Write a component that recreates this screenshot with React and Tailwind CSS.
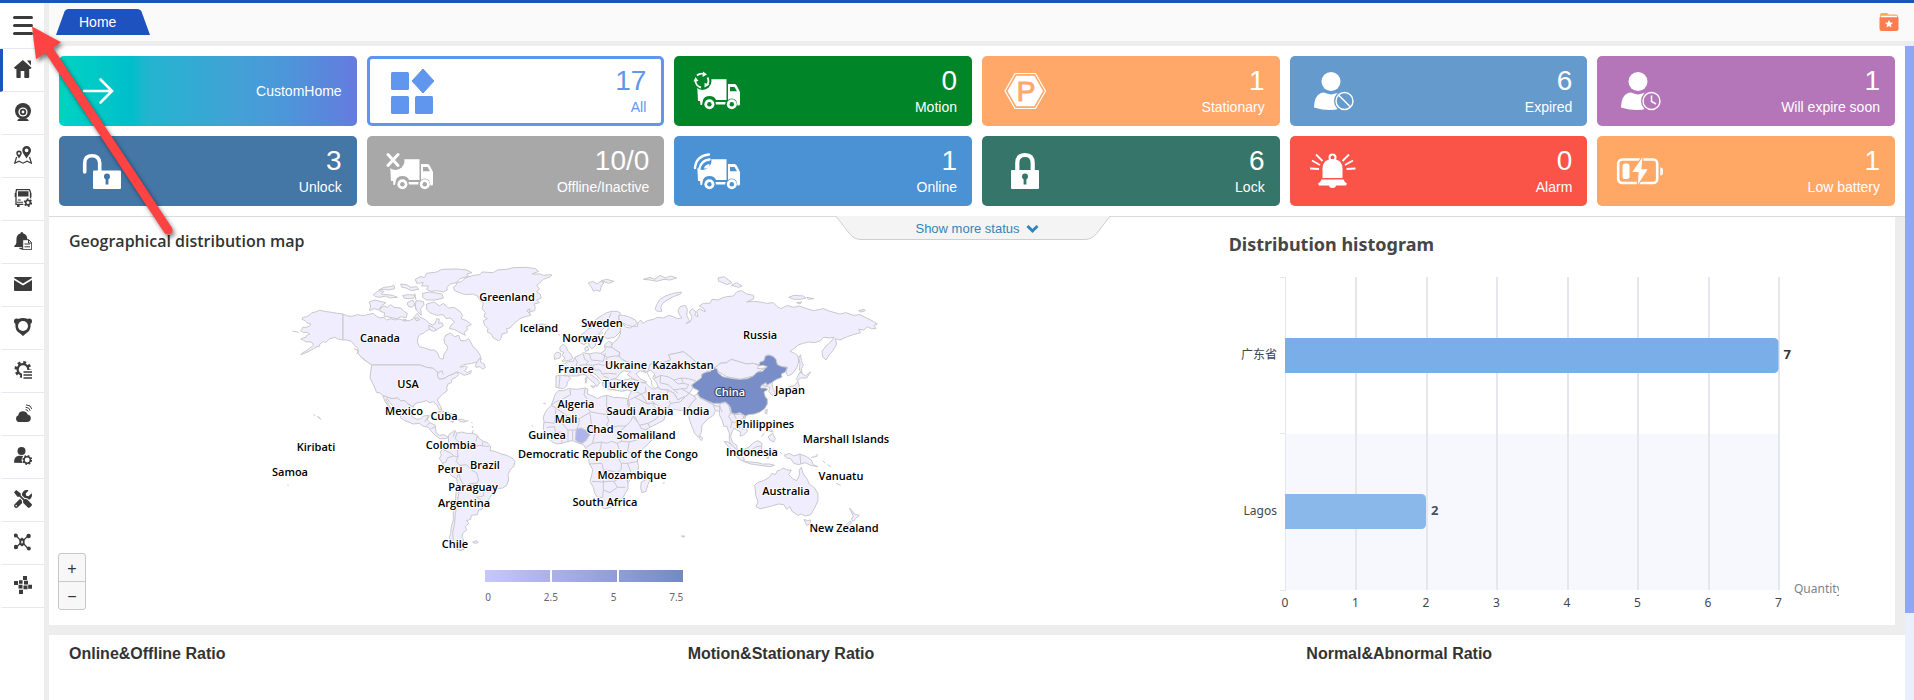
import { FaTools } from 'react-icons/fa'

const BLUE = '#1d52bf'
const INK = '#3b3b3b'

/* ---------- Sidebar icons ---------- */

const SideIcon = ({ children }) => (
  <svg width="18" height="18" viewBox="0 0 18 18" fill={INK} aria-hidden="true">{children}</svg>
)

const HomeIcon = () => (
  <SideIcon>
    <path d="M8.8 0 0 7.6 1 9h1.4v8.2q0 .8.8.8H6q.7 0 .7-.8V11h3.6v6.2q0 .8.8.8h3.3q.8 0 .8-.8V9h1.2l1.2-1.2z" />
    <path d="M13 .6h4v5z" />
  </SideIcon>
)

const WebcamIcon = () => (
  <SideIcon>
    <circle cx="9" cy="8" r="8" />
    <circle cx="9" cy="9" r="4.6" fill="#fff" />
    <circle cx="9" cy="9" r="3.2" />
    <circle cx="9" cy="9" r="1.4" fill="#fff" />
    <path d="M3.4 18q0-2.2 3-2.8h5.2q3 .6 3 2.8z" />
  </SideIcon>
)

const PinsIcon = () => (
  <SideIcon>
    <path fillRule="evenodd" d="M12.6 0a4.3 4.3 0 0 0-4.3 4.4c0 2.6 2.4 4.5 4.3 8 1.9-3.5 4.4-5.4 4.4-8A4.3 4.3 0 0 0 12.6 0zm0 2.4a1.9 1.9 0 1 1 0 3.8 1.9 1.9 0 0 1 0-3.8z" />
    <path fillRule="evenodd" d="M5 4.6A2.7 2.7 0 0 0 2.3 7.4C2.3 9 3.8 10 5 12.4 6.2 10 7.7 9 7.7 7.4A2.7 2.7 0 0 0 5 4.6zm0 1.6a1.2 1.2 0 1 1 0 2.4 1.2 1.2 0 0 1 0-2.4z" />
    <path d="M2.6 11 .7 17.2l4.3-2 4 2 4-2 4.4 2-1.9-6.2" fill="none" stroke={INK} strokeWidth="1.2" />
  </SideIcon>
)

const BusIcon = () => (
  <SideIcon>
    <path d="M2.5.7h13l1 2.6v12H2V3.3z" fill="none" stroke={INK} strokeWidth="1.3" />
    <path d="M4 2.2h10.5v5.200H4zM.7 4h1.400v4H.7zM16 4h1.400v4H16zM3 15h2.600v3H3zM3.800 10.500h3v1h-3zM3 12.800h6v1H3z" />
    <circle cx="14" cy="13.6" r="5" fill="#fff" />
    <circle cx="14" cy="13.6" r="3.4" fill="none" stroke={INK} strokeWidth="1.8" strokeDasharray="1.780 1.780" />
    <circle cx="14" cy="13.6" r="2.300" fill="none" stroke={INK} strokeWidth="1.600" />
  </SideIcon>
)

const BellDocIcon = () => (
  <SideIcon>
    <path d="M7.8 0q1.5 0 1.5 1.600 4 1.200 4 6v3.200l1.500 4.200H.4q-.6-1 .6-1.800 1.400-1 1.400-3V7.600q0-4.800 4-6Q6.400 0 7.800 0zM5 15.800h4v1.600q-4 .4-4-1.600z" />
    <path d="M8.700 7.700h6l3 3v7h-9z" fill="#fff" stroke={INK} strokeWidth="1" />
    <path d="M10.500 12h5.500M10.500 14.800h5.500M14.500 8v3h3" stroke={INK} strokeWidth="1" fill="none" />
  </SideIcon>
)

const MailIcon = () => (
  <SideIcon>
    <path d="M0 3q0-1 1-1h16q1 0 1 1L9 8.600z" />
    <path d="M0 5v10q0 1 1 1h16q1 0 1-1V5l-9 5.600z" />
  </SideIcon>
)

const ShieldIcon = () => (
  <SideIcon>
    <circle cx="2.600" cy="3.200" r="2.600" />
    <circle cx="15.400" cy="3.200" r="2.600" />
    <path d="M9 0q5 0 7 2.500.8 3 .5 6.500-.8 4.500-4 6L9 18l-3.500-3q-3.400-1.500-4-6-.4-3.500.5-6.500Q4 0 9 0z" />
    <circle cx="9" cy="8" r="5" fill="#fff" />
  </SideIcon>
)

const GearListIcon = () => (
  <SideIcon>
    <circle cx="9" cy="8.500" r="7" fill="none" stroke={INK} strokeWidth="3" strokeDasharray="2.750 2.750" />
    <circle cx="9" cy="8.500" r="5.400" fill="none" stroke={INK} strokeWidth="2.200" />
    <path d="M8 9h10v9H8z" fill="#fff" />
    <path d="M9.500 10.200H18v1.500H9.500zM9.500 13.200H18v1.500H9.500zM9.500 16.200H18v1.500H9.500z" />
  </SideIcon>
)

const CloudIcon = () => (
  <SideIcon>
    <path d="M6 18q-4 0-4-3.600 0-2.400 2.300-3.200.5-4 4.700-4 3.400 0 4.600 3.300 3.200.5 3.200 3.800 0 3.700-4 3.700z" />
    <path d="M11.600 5.600q2 0 2.500 2M11.600 3.200q4 .2 4.600 3.600M12 .8q5 .2 6 4.400" fill="none" stroke={INK} strokeWidth="1" />
  </SideIcon>
)

const UserGearIcon = () => (
  <SideIcon>
    <circle cx="7.500" cy="4" r="4" />
    <path d="M0 15.800Q0 9.400 4.500 8.800L11 9v7z" />
    <circle cx="13.200" cy="13" r="5.600" fill="#fff" />
    <circle cx="13.200" cy="13" r="4.200" fill="none" stroke={INK} strokeWidth="1.600" strokeDasharray="1.650 1.650" />
    <circle cx="13.200" cy="13" r="3.200" fill="none" stroke={INK} strokeWidth="1.500" />
  </SideIcon>
)

const NetworkIcon = () => (
  <SideIcon>
    <path d="M2 2.500 14.500 16M14.500 2.500 2 14.500" stroke={INK} strokeWidth="1.200" />
    <path d="M8 4.500 10.600 6.500v5L8 13.500 5.400 11.500v-5z" />
    <path d="M8 7.300l1 1.800-1 1.800-1-1.800z" fill="#fff" />
    <circle cx="1.800" cy="2.400" r="2" />
    <circle cx="14.600" cy="3" r="2.200" />
    <circle cx="1.900" cy="14" r="2.200" />
    <circle cx="14.800" cy="15.600" r="2" />
  </SideIcon>
)

const ClusterIcon = () => (
  <SideIcon>
    <path d="M9 0h4v4H9zM5 4.200h3.600v3.600H5zM10 4.800h4v3.800h-4zM0 5h4v4H0zM4.500 8.800h4v3.800h-4zM9.500 9.500h4v3.800h-4zM14.200 8.800H18v4h-3.800zM5 13.800h4V18H5z" />
  </SideIcon>
)

const menu = [
  { label: 'Home', icon: HomeIcon, active: true },
  { label: 'Monitor', icon: WebcamIcon },
  { label: 'Track', icon: PinsIcon },
  { label: 'Vehicles', icon: BusIcon },
  { label: 'Alarm report', icon: BellDocIcon },
  { label: 'Messages', icon: MailIcon },
  { label: 'Geofence', icon: ShieldIcon },
  { label: 'Settings', icon: GearListIcon },
  { label: 'Cloud', icon: CloudIcon },
  { label: 'Users', icon: UserGearIcon },
  { label: 'Tools', icon: () => <FaTools size={18} color={INK} /> },
  { label: 'Network', icon: NetworkIcon },
  { label: 'Cluster', icon: ClusterIcon },
]

/* ---------- Status card icons ---------- */

const CardIcon = ({ children, color = '#fff' }) => (
  <svg width="48" height="48" viewBox="0 0 48 48" fill={color} className="shrink-0" aria-hidden="true">{children}</svg>
)

const ArrowIcon = () => (
  <CardIcon>
    <path d="M6 24h27M22.500 12.500 34 24 22.500 35.500" fill="none" stroke="#fff" strokeWidth="2.600" strokeLinecap="round" />
  </CardIcon>
)

const AllIcon = () => (
  <CardIcon color="#6196ee">
    <rect x="5" y="5" width="18" height="18" rx="1.500" />
    <rect x="5" y="29" width="18" height="18" rx="1.500" />
    <rect x="29" y="29" width="18" height="18" rx="1.500" />
    <path d="M37 2 48 14 37 26 26 14z" stroke="#6196ee" strokeLinejoin="round" />
  </CardIcon>
)

const Truck = ({ cut, children }) => (
  <CardIcon>
    <path d="M4 15h8v-2.700h21.500V33H23q-1.500-4-6.500-4t-6.500 4l-1 5H7.500l-.5-4H5z" />
    <path d="M22.500 35h10.200l-.7 2.500H23z" />
    <path d="M35 17h6.500q1.500 0 2.200 1.500L47 25v12q0 1.500-1.500 1.500h-1Q44 31.500 38.800 31.500q-3 0-3.800 1.500z" />
    <path d="M37 20h4.500l2.500 4.300H37z" fill={cut} />
    <circle cx="16.400" cy="37.300" r="5" />
    <circle cx="16.400" cy="37.300" r="2.200" fill={cut} />
    <circle cx="38.800" cy="37.300" r="5" />
    <circle cx="38.800" cy="37.300" r="2.200" fill={cut} />
    <circle cx="9.500" cy="14" r="9" fill={cut} />
    {children}
  </CardIcon>
)

const MotionIcon = () => (
  <Truck cut="#008528">
    <g fill="none" stroke="#fff" strokeWidth="1.800">
      <path d="M4 8.500A7 7 0 0 1 11 7M14.500 10.500A7 7 0 0 1 13.500 18.500M8 20.500A7 7 0 0 1 2.500 13.500" />
    </g>
    <path d="M10 4.500 14 7.500l-4.500 2.400zM16.500 17.500l-5 3v-4.500zM.5 14.500 2.500 10 5.500 14z" />
  </Truck>
)

const OfflineIcon = () => (
  <Truck cut="#a8a8a8">
    <path d="M2 7.500 12 18.500M12 7.500 2 18.500" stroke="#fff" strokeWidth="3" strokeLinecap="round" />
  </Truck>
)

const OnlineIcon = () => (
  <Truck cut="#4b92d4">
    <path d="M2 21Q3 9 16 7.500M6.500 21.500Q8 13.500 16.500 12.500" fill="none" stroke="#fff" strokeWidth="2.400" strokeLinecap="round" />
    <path d="M11 21.500Q11.500 17.500 16.500 17L16.500 21.500z" />
  </Truck>
)

const ParkIcon = () => (
  <CardIcon>
    <path d="M4 24 14 6.500h20.500L44.500 24 34.500 41.500H14z" fill="none" stroke="#fff" strokeWidth="1.200" />
    <path d="M6.500 24 15.300 8.700h18L42 24l-8.700 15.300h-18z" />
    <text x="25" y="34" textAnchor="middle" fontFamily="Liberation Sans, sans-serif" fontSize="28" fill="#ffa869" stroke="#ffa869">P</text>
  </CardIcon>
)

const Person = ({ cut, children }) => (
  <CardIcon>
    <circle cx="22" cy="14.500" r="9.500" />
    <path d="M5 40.500Q5 29 12 26q3-1 5 .3 5 2.200 10 0l4-.8v16Q20 45 5 40.500z" />
    <circle cx="35.500" cy="34" r="10.500" fill={cut} />
    <circle cx="35.500" cy="34" r="8.500" fill="none" stroke="#fff" strokeWidth="1.400" />
    {children}
  </CardIcon>
)

const ExpiredIcon = () => (
  <Person cut="#659acd"><path d="M29.500 28 41.500 40" stroke="#fff" strokeWidth="1.400" /></Person>
)

const SoonIcon = () => (
  <Person cut="#b576b9"><path d="M35.500 28.500V34.500L40 37" fill="none" stroke="#fff" strokeWidth="1.500" /></Person>
)

const UnlockIcon = () => (
  <CardIcon>
    <path d="M6.700 25V16Q6.700 8.700 14 8.700t7.700 7.300v9" fill="none" stroke="#fff" strokeWidth="3.600" strokeLinecap="round" />
    <rect x="15" y="23.500" width="28" height="18.500" rx="1" />
    <circle cx="29" cy="29.500" r="3" fill="#4476a6" />
    <path d="M27.600 30h2.800v7.500h-2.800z" fill="#4476a6" />
  </CardIcon>
)

const LockIcon = () => (
  <CardIcon>
    <path d="M16.300 24V16Q16.300 8 24 8t7.700 8v8" fill="none" stroke="#fff" strokeWidth="4.200" />
    <rect x="10" y="23" width="28" height="19" rx="1" />
    <circle cx="24" cy="29.500" r="3" fill="#36756a" />
    <path d="M22.600 30h2.800v7.500h-2.800z" fill="#36756a" />
  </CardIcon>
)

const AlarmIcon = () => (
  <CardIcon>
    <circle cx="23.500" cy="10.500" r="3" fill="none" stroke="#fff" strokeWidth="2" />
    <path d="M13.500 31V22q0-10 10-10t10 10v9zM12.500 32.500h22q1 3 3.500 4l-1 2H27q-.5 2.500-3.500 2.500T20 38.500H10l-1-2q2.500-1 3.500-4z" />
    <path d="M7 7.500l6.500 6.500M3 13.500l8 4.500M1 21.500l9 .5M40 7.500 33.500 14M44 13.500 36 18M46.500 21.500l-9 .5" stroke="#fff" strokeWidth="1.800" />
  </CardIcon>
)

const BatteryIcon = () => (
  <CardIcon>
    <rect x="2.200" y="12.500" width="39" height="23.500" rx="4" fill="none" stroke="#fff" strokeWidth="2.600" />
    <rect x="6.500" y="16.500" width="7" height="15.500" rx="2.500" />
    <path d="M44.300 20.500q2.700 0 2.700 2.500v3q0 2.500-2.700 2.500z" />
    <path d="M27.300 8 15.300 25.500H22L21.300 39.500 32.700 21.700H26z" stroke="#ffa866" strokeWidth="1.200" />
  </CardIcon>
)

const cards = [
  { label: 'CustomHome', icon: ArrowIcon, style: 'pl-[19px] pr-[15px] text-white bg-[linear-gradient(90deg,#00d3c2_0%,#00bfcb_24%,#23b4d0_30%,#44a1d6_60%,#4b97d8_75%,#657bde_100%)]' },
  { value: '17', label: 'All', icon: AllIcon, style: 'pl-4 pr-[15px] border-3 border-[#6196ee] bg-white text-[#6196ee]' },
  { value: '0', label: 'Motion', icon: MotionIcon, style: 'pl-[19px] pr-[15px] bg-[#008528] text-white' },
  { value: '1', label: 'Stationary', icon: ParkIcon, style: 'pl-[19px] pr-[15px] bg-[#ffa869] text-white' },
  { value: '6', label: 'Expired', icon: ExpiredIcon, style: 'pl-[19px] pr-[15px] bg-[#659acd] text-white' },
  { value: '1', label: 'Will expire soon', icon: SoonIcon, style: 'pl-[19px] pr-[15px] bg-[#b576b9] text-white' },
  { value: '3', label: 'Unlock', icon: UnlockIcon, style: 'pl-[19px] pr-[15px] bg-[#4476a6] text-white' },
  { value: '10/0', label: 'Offline/Inactive', icon: OfflineIcon, style: 'pl-[19px] pr-[15px] bg-[#a8a8a8] text-white' },
  { value: '1', label: 'Online', icon: OnlineIcon, style: 'pl-[19px] pr-[15px] bg-[#4b92d4] text-white' },
  { value: '6', label: 'Lock', icon: LockIcon, style: 'pl-[19px] pr-[15px] bg-[#36756a] text-white' },
  { value: '0', label: 'Alarm', icon: AlarmIcon, style: 'pl-[19px] pr-[15px] bg-[#fa5448] text-white' },
  { value: '1', label: 'Low battery', icon: BatteryIcon, style: 'pl-[19px] pr-[15px] bg-[#ffa866] text-white' },
]

/* ---------- World map ---------- */

// western hemisphere outlines
const west = [
  // Alaska
  'M189 192 172 190 155 187 140 185 118 181 106 186 95 188 88 196 80 200 67 203 66 208 75 212 80 218 92 222 90 228 80 232 68 232 66 238 62 242 70 248 82 247 90 252 80 256 78 262 68 264 62 268 70 270 76 275 92 276 98 279 100 286 88 296 76 304 68 308 62 314 78 308 95 300 108 291 120 288 118 284 130 274 136 278 150 266 165 262 176 268 189 270z',
  // Canada
  'M189 192 202 198 215 199 232 194 250 197 262 194 280 190 288 198 300 204 312 202 320 210 332 206 345 210 358 207 372 212 388 212 400 206 404 198 412 190 420 202 430 206 440 212 447 220 458 225 466 220 470 206 478 208 476 220 486 218 490 228 478 234 468 240 452 238 440 241 430 250 420 253 414 262 412 275 418 290 434 294 450 300 462 300 472 307 476 318 480 326 490 327 492 312 500 302 503 290 494 280 492 266 498 255 512 250 524 260 536 256 542 272 556 272 566 266 578 288 590 300 600 315 604 328 592 336 575 340 562 342 550 344 540 352 556 348 562 352 554 362 562 368 574 362 572 370 552 376 542 370 530 366 520 372 505 378 492 386 478 388 472 378 474 368 460 355 440 352 420 345 275 345 262 336 250 328 240 318 232 305 234 296 222 284 214 274 200 270 189 270z',
  // USA
  'M275 345 420 345 440 352 460 355 474 368 472 378 478 388 492 386 505 378 520 372 530 366 536 374 528 382 516 388 514 398 504 402 500 414 502 422 488 432 478 442 472 450 480 466 486 478 478 480 470 464 460 455 448 458 440 452 425 456 412 458 402 464 400 472 390 464 384 462 375 452 362 452 352 444 336 446 308 437 300 428 290 428 282 408 276 396 270 384 272 366z',
  // Mexico and Central America
  'M308 437 336 446 352 444 362 452 375 452 384 462 393 468 390 486 396 500 410 508 422 506 430 498 448 496 442 510 450 518 466 526 468 548 478 556 492 554 505 562 498 566 480 566 466 556 452 542 446 532 428 528 418 520 400 522 375 512 362 504 360 494 350 482 340 470 330 458 322 446 318 448 326 462 334 478 326 470 316 456z',
  // Greenland
  'M520 112 530 104 528 98 545 95 556 84 580 76 600 74 606 66 640 68 652 60 680 58 700 53 740 52 766 56 776 64 756 72 780 72 790 76 815 74 812 80 790 88 778 100 770 106 778 116 770 126 780 132 784 144 770 150 778 158 762 162 766 172 764 182 748 186 752 196 735 200 720 206 700 222 690 234 680 236 682 248 666 252 662 268 656 272 640 264 634 252 622 246 624 236 614 226 610 212 622 206 612 200 616 188 606 176 610 160 600 152 592 138 578 132 556 134 544 130 524 122z',
  // Arctic islands
  'M406 88 420 80 434 82 440 70 470 66 485 58 530 57 560 60 576 68 560 72 566 78 540 86 528 98 512 102 500 112 502 120 490 126 470 122 452 124 440 118 445 108 425 108 430 98 410 100z',
  'M428 130 450 126 486 132 490 144 466 150 440 150 428 142z',
  'M268 156 284 150 300 154 318 158 306 166 296 180 282 176 268 182 272 168z',
  'M300 176 312 168 322 172 332 164 342 172 362 174 372 184 382 190 378 204 364 200 350 206 330 202 312 198 314 188 300 184z',
  'M440 162 462 156 478 168 490 160 505 174 522 172 540 184 548 196 543 206 560 212 574 224 560 230 562 240 552 248 556 256 540 248 522 238 508 236 512 226 524 216 510 204 498 206 490 194 470 196 450 188 440 178z',
  'M280 134 296 122 312 124 304 132 320 134 338 136 352 142 330 144 318 138 300 142 286 140z',
  'M296 120 312 112 330 110 342 106 344 116 326 120 312 118z',
  'M362 102 380 104 392 112 410 110 416 118 394 122 378 114 366 112z',
  'M368 136 388 134 406 136 402 144 384 146 372 144z',
  'M382 158 398 150 404 162 396 172 384 168zM408 152 430 154 432 164 422 176 424 196 412 184 406 170z',
  'M368 210 378 208 376 214zM446 226 460 232 470 240 460 244 448 238zM404 204 414 204 418 210 408 212z',
  // Newfoundland
  'M586 346 592 334 600 324 602 336 612 342 616 352 608 358 600 350 588 352z',
  // Greater Antilles
  'M470 487 484 483 500 487 516 492 532 502 520 503 508 496 490 490 476 490zM534 508 548 508 560 514 552 516 540 515zM512 514 522 514 518 517z',
  // South America
  'M505 562 508 552 518 546 524 540 530 550 545 546 560 550 580 550 592 556 598 566 610 574 622 578 632 590 630 602 645 604 664 612 680 616 696 624 705 634 702 648 690 660 684 674 686 690 680 706 668 714 652 716 640 722 634 736 625 750 612 756 604 752 606 762 612 768 606 778 596 780 592 794 574 796 572 808 560 812 566 820 556 830 560 840 548 850 546 862 552 870 546 880 552 898 540 902 524 894 514 880 508 862 512 850 514 830 520 810 520 784 526 760 528 730 532 700 530 686 516 678 502 664 494 650 484 634 478 626 484 614 480 606 488 598 500 590 506 576z',
  // Falklands, Hawaii, Iceland, Aleutians
  'M578 876 590 872 594 878 584 880zM100 494 106 496M112 500 118 502 122 508 118 504zM38 244 48 245 56 248M790 460 798 462M755 228 765 224 790 222 806 228M834 252 840 256M756 526 758 530M22 704 26 706M560 512 566 513M574 516 577 520M576 528 578 534M580 540 576 552',
]

// inner borders of the Americas
const westLines = [
  'M262 336 240 318M222 296 236 302 230 312M446 496 434 516M450 518 440 526M466 530 454 536M474 368 486 362 490 374',
  'M530 550 526 566 534 574 550 580 548 592 532 600 534 620 520 618 502 624 498 636 486 640M488 598 500 604 514 610 520 618M550 580 566 576 576 580 584 590 598 586 612 588 628 590M592 556 588 574M610 574 606 586M534 620 528 634 540 646 560 644 574 660 590 668 596 690 590 700 576 700M540 646 536 670 530 686M536 670 544 694 552 706 576 700 596 716 612 726 610 738 590 742M540 706 536 730 532 760 526 790 524 820 518 850 520 876M590 742 606 752M524 546 520 560M404 130 408 150M404 162 408 180M740 182 750 176 748 190z',
]

// eastern hemisphere outlines
const east = [
  // Scandinavia and Finland
  'M118 262 126 252 138 244 144 236 154 234 160 218 168 208 180 200 190 194 200 188 216 184 232 184 242 190 236 200 238 214 244 232 240 246 224 262 200 266 192 258 198 244 206 236 198 230 188 238 176 252 178 264 170 272 166 288 156 296 148 290 144 276 132 284 120 278z',
  // Russia
  'M236 196 252 196 270 202 286 210 292 220 280 230 262 226 246 218 258 232 272 234 280 228 292 230 294 218 302 210 308 220 322 212 340 208 352 202 370 204 386 196 400 200 412 206 426 204 418 194 414 182 420 170 436 166 442 178 440 196 446 208 450 216 438 220 452 214 456 200 448 186 456 176 468 186 464 196 474 200 470 184 478 176 496 186 492 176 478 168 490 160 510 160 516 148 534 150 546 144 560 140 580 138 590 126 604 122 620 132 640 136 642 146 620 156 640 154 660 156 680 160 700 158 712 170 722 176 742 166 760 172 778 168 800 176 820 182 850 176 870 184 900 192 918 188 940 196 960 194 984 206 1000 214 1012 222 1002 226 1008 236 994 236 982 230 972 240 956 238 962 248 940 254 922 260 900 270 886 266 890 282 880 300 868 314 858 330 848 320 846 304 858 288 872 276 882 262 868 264 850 262 842 272 824 278 806 276 790 280 776 284 762 296 750 304 764 310 774 318 776 336 770 354 756 372 744 378 738 368 742 352 722 350 712 344 706 328 698 318 680 315 664 346 640 340 620 342 600 336 574 328 560 338 540 340 530 352 500 350 470 338 450 320 430 305 408 310 386 314 392 330 370 338 345 334 330 344 334 358 322 368 308 358 296 352 286 344 262 336 246 328 236 318 240 308 226 300 214 290 218 280 234 266 242 250 240 224z',
  // Central Asia
  'M322 368 330 344 345 334 370 338 392 330 386 314 408 310 430 305 450 320 470 338 500 350 522 356 520 362 500 366 486 372 484 384 470 394 455 405 458 416 448 430 436 440 424 444 414 450 402 430 384 420 362 418 352 408 344 400 336 388 346 384 344 374z',
  // Middle East, Iran, Afghanistan, Pakistan
  'M188 396 204 390 222 386 246 392 272 386 296 392 306 398 318 400 326 408 340 418 352 412 362 418 384 420 402 430 414 450 424 444 436 440 448 430 462 438 468 446 456 458 448 470 440 478 424 482 400 478 382 474 368 478 350 464 338 460 350 478 362 484 376 494 372 510 350 522 330 532 306 544 298 526 284 498 270 470 264 450 268 434 274 424 262 420 246 424 222 420 200 416 188 408z',
  // Mongolia
  'M522 356 540 340 560 338 574 328 600 336 620 342 640 340 656 346 652 356 676 354 654 366 640 378 600 388 560 380 540 368z',
  // Korea
  'M664 406 680 398 700 390 696 402 700 420 708 430 696 436 686 424 690 412z',
  // Japan, Sakhalin
  'M770 386 780 366 796 378 812 366 800 384 782 384 772 392zM774 394 778 408 766 422 750 424 736 430 718 430 706 438 702 432 724 424 744 412 764 406zM782 314 784 332 790 346 784 356 786 370 778 360 780 340 776 324z',
  // India
  'M448 470 456 458 468 446 462 438 472 432 480 444 500 454 520 460 540 460 546 468 540 484 526 482 520 496 502 508 486 526 484 548 476 562 464 550 456 530 448 508 446 494 436 488z',
  'M480 558 488 564 484 572 478 566z',
  // Indochina
  'M540 460 556 458 566 466 572 488 582 494 606 492 612 504 600 510 618 530 622 544 610 556 600 558 602 546 590 540 582 534 576 546 572 560 578 578 590 586 592 600 580 596 568 574 568 550 560 528 552 530 546 510 538 494z',
  // Indonesia, Philippines, Papua
  'M552 574 564 576 578 588 592 600 606 616 614 630 604 632 588 618 572 598zM610 634 630 636 652 638 668 642 688 642 704 646 690 650 660 646 632 642zM612 598 626 592 640 578 654 572 666 580 664 600 656 618 640 620 620 614zM676 604 690 598 704 598 692 606 700 616 688 614 684 626 678 620z',
  'M678 524 690 522 692 538 700 546 690 544 682 538zM684 560 698 550 706 566 700 576 690 570zM664 560 674 548M676 480 682 478 680 492 675 490zM610 500 618 498 614 508z',
  'M732 616 748 610 762 618 780 612 800 620 814 630 820 644 834 650 812 646 796 638 776 644 762 640 752 626 740 624zM814 622 830 620 832 612M848 632 856 640M862 644 872 650M720 606 726 612M888 700 902 706',
  // Europe
  'M54 346 72 342 86 334 100 334 104 322 122 314 130 308 148 312 166 308 182 310 196 300 194 284 206 274 216 278 214 290 226 300 240 308 236 318 246 328 262 336 286 344 296 352 308 358 318 368 300 362 288 372 300 386 320 396 306 398 280 386 262 374 272 366 252 362 240 370 230 384 216 388 206 394 210 408 198 410 190 396 178 386 168 374 156 366 152 374 170 386 180 398 170 410 164 400 148 388 136 374 124 374 112 378 96 378 74 378 78 364 68 352z',
  'M48 378 60 376 84 378 92 386 82 396 80 408 70 416 56 414 48 412zM60 292 70 282 78 290 84 304 94 314 98 326 86 332 66 334 76 324 66 316 72 308 60 302zM42 316 50 306 62 310 60 324 44 328z',
  'M136 384 140 382 140 396 136 400zM152 408 166 408 160 414zM214 418 226 418M248 420 256 422M134 294 142 288 146 300 136 304z',
  // Africa
  'M46 432 56 422 70 422 86 416 112 418 136 414 144 418 142 432 158 438 172 446 184 440 200 436 220 442 252 444 262 446 268 458 262 462 274 484 282 504 296 520 304 536 322 540 344 542 350 548 338 568 320 586 304 600 294 616 292 634 296 650 292 668 276 682 264 698 264 716 256 730 246 746 232 762 212 772 194 776 182 768 174 744 164 730 160 712 150 694 156 672 158 658 148 642 146 628 136 612 138 596 130 584 112 578 98 572 84 574 66 580 50 582 34 574 22 562 14 550 10 534 12 516 10 500 20 480 34 466z',
  'M304 696 316 690 326 672 332 686 324 704 318 724 306 728 302 714z',
  // Arctic archipelagos
  'M345 178 350 164 360 148 376 138 400 130 424 126 422 132 400 140 382 150 368 160 362 172 366 184 352 184z',
  'M144 100 158 94 172 102 180 94 192 98 184 108 180 124 168 120 160 124 154 110zM184 92 200 88 222 94 206 100zM310 88 330 82 344 88 360 76 376 84 392 78 410 84 390 90 372 88 350 94 330 90z',
  'M534 84 552 80 566 90 576 98 560 104 544 96 536 94zM574 106 590 98 606 108 596 112zM746 142 762 136 790 138 798 144 780 148 764 148zM800 142 822 146 806 148zM770 158 786 156 780 162zM956 182 972 178 976 182 962 186z',
  // Australia, Tasmania, New Zealand
  'M644 706 652 698 670 692 688 682 696 670 706 674 712 662 722 660 728 654 744 660 754 660 746 674 758 686 770 692 778 676 778 660 784 652 790 672 802 688 808 702 824 714 834 732 834 752 824 774 812 794 796 798 784 792 774 796 756 784 750 770 740 778 732 764 716 762 696 768 680 772 660 776 648 770 654 756 648 738z',
  'M792 808 802 812 812 810 810 822 800 826zM928 774 938 784 942 792 958 796 946 806 940 814 934 808 940 798zM932 812 934 820 920 832 906 848 896 850 904 838 920 824zM424 858 434 858 432 862zM368 700 374 698',
]

const eastLines = [
  // Europe
  'M104 322 112 336 108 350 118 356 114 374M130 312 134 328 146 334 136 344 118 346M148 312 154 330 174 332 190 334 196 310M136 344 158 346 174 342 190 346 214 338 236 346 262 354M160 348 164 360 180 360 186 372 206 370 230 372M182 310 202 322 224 318 240 318M202 322 196 334M192 290 216 292M190 378 206 384M60 378 58 400 56 414M190 246 168 262 150 264M214 188 206 206 190 216 176 236',
  // Africa
  'M90 418 92 434 70 446 46 456 34 466M136 414 132 434 142 448 140 470 152 486M34 466 48 474 84 500 118 506 152 486 200 494 200 436M200 494 206 512 200 524 208 536 232 528 258 528 272 514 278 500M200 486 272 486M48 474 44 520 12 516M44 520 66 520 84 500M118 506 116 526 108 540 84 540 66 520M150 490 154 520 148 540M154 530 164 550 190 546 208 536M20 532 44 530 46 548 24 552M46 548 64 546 66 578M84 540 84 574M98 540 98 572M164 550 158 580 138 592M158 580 184 576 200 580 214 574 232 580 244 574 246 556 232 550 258 528M244 574 268 576 304 566 322 560M184 576 182 596 166 620 148 622M232 580 238 600 232 620 244 640 262 640 294 634M148 642 186 640 190 660 210 662 232 668 244 658 244 640M156 694 190 696 204 694 222 694 240 684 262 690 264 700M190 660 190 696 190 720 188 742 172 742M190 720 210 728 232 712 256 712M222 694 232 712M268 576 262 604 294 620M262 640 270 658 276 680M262 450 266 470',
  // Middle East and Central Asia
  'M274 424 290 426 304 432 318 426 316 410M268 450 284 442 304 432 322 460 338 460M284 442 300 450 326 464M322 426 330 448 346 462M298 526 324 520 350 506 362 484M330 532 324 520M384 420 380 440 392 460 384 474M392 460 420 456 436 440M346 384 362 376 384 380 402 390 424 384 446 386 470 394M362 376 360 398 384 404 402 420 414 430M402 390 414 402 430 400 446 404 440 416 424 416M424 384 430 400M402 420 424 416 448 430',
  // South and South-East Asia
  'M500 454 520 464 526 482M520 466 540 470 546 486M572 488 566 500 576 516 572 534M582 494 590 508 606 520 608 540M576 516 594 518 600 534 584 536M612 600 634 600 650 590 664 588M780 612 782 642',
]

const CHINA = 'M455 405 470 394 484 384 486 372 500 366 512 364 520 352 532 358 534 368 548 380 580 386 600 388 622 386 640 378 652 366 668 364 676 354 682 350 668 346 656 348 660 336 672 332 676 318 688 315 700 320 708 328 712 344 726 350 742 352 736 366 724 372 726 382 710 388 694 398 680 406 678 398 664 406 662 414 676 414 684 418 672 426 676 440 682 448 682 462 674 476 660 486 644 492 626 494 616 498 600 488 584 492 574 488 572 474 566 464 556 456 540 460 520 460 500 452 480 442 472 430 476 422 460 414z'
const NIGERIA = 'M108 544 112 536 124 534 136 540 150 540 154 548 144 562 138 572 126 580 114 576 106 570z'

const places = [
  ['Greenland', 507, 301], ['Iceland', 539, 332], ['Canada', 380, 342], ['USA', 408, 388], ['Mexico', 404, 415],
  ['Cuba', 444, 420], ['Kiribati', 316, 451], ['Samoa', 290, 476], ['Colombia', 451, 449], ['Peru', 450, 473],
  ['Brazil', 485, 469], ['Paraguay', 473, 491], ['Argentina', 464, 507], ['Chile', 455, 548], ['Sweden', 602, 327],
  ['Norway', 583, 342], ['Russia', 760, 339], ['France', 576, 373], ['Ukraine', 626, 369], ['Kazakhstan', 683, 369],
  ['Turkey', 621, 388], ['Iran', 658, 400], ['Japan', 790, 394], ['Algeria', 576, 408], ['Saudi Arabia', 640, 415],
  ['India', 696, 415], ['Mali', 566, 423], ['Chad', 600, 433], ['Philippines', 765, 428], ['Guinea', 547, 439],
  ['Somaliland', 646, 439], ['Marshall Islands', 846, 443], ['Indonesia', 752, 456], ['Democratic Republic of the Congo', 608, 458],
  ['Vanuatu', 841, 480], ['Mozambique', 632, 479], ['Australia', 786, 495], ['South Africa', 605, 506], ['New Zealand', 844, 532],
]

const WorldMap = () => (
  <svg width="640" height="310" viewBox="264 250 640 310" role="img" aria-label="World map">
    <g fill="#f0edfe" stroke="#c8c8ca" strokeWidth="3" strokeLinejoin="round">
      <g transform="translate(280 250) scale(.33333)">
        {west.map((d) => <path key={d} d={d} />)}
        {westLines.map((d) => <path key={d} d={d} fill="none" />)}
      </g>
      <g transform="translate(540 250) scale(.33333)">
        {east.map((d) => <path key={d} d={d} />)}
        {eastLines.map((d) => <path key={d} d={d} fill="none" />)}
        <path d="M320 366 332 360 344 372 338 384 350 398 354 412 344 416 336 406 334 392z" fill="#fff" />
        <path d={NIGERIA} fill="#afb5eb" />
        <path d={CHINA} fill="#798ec8" />
      </g>
    </g>
    <g textAnchor="middle" fontFamily="Open Sans, Noto Sans, sans-serif" fontSize="11" fontWeight="600" fill="#000" stroke="#fff" strokeWidth="2" strokeLinejoin="round" paintOrder="stroke">
      {places.map(([name, x, y]) => <text key={name} x={x} y={y}>{name}</text>)}
      <text x="730" y="396" fill="#fff" stroke="#33405f">China</text>
    </g>
  </svg>
)

/* ---------- Histogram ---------- */

const X0 = 56
const STEP = 70.5
const provinces = [
  { name: '广东省', value: 7, y: 76, color: '#7aaee8', ink: '#333' },
  { name: 'Lagos', value: 2, y: 232, color: '#8ab8ea', ink: '#4b5060' },
]

const Histogram = () => (
  <svg width="610" height="355" viewBox="0 0 610 355" role="img" aria-label="Distribution histogram" fontFamily="Noto Sans, Noto Sans CJK SC, sans-serif" fontSize="12">
    <rect x={X0} y="172" width={STEP * 7} height="156" fill="#f7f8fd" />
    {[0, 1, 2, 3, 4, 5, 6, 7].map((n) => (
      <g key={n}>
        <rect x={Math.floor(X0 + n * STEP)} y="15" width={n ? 2 : 1} height="313" fill="#e5e6ee" />
        <text x={X0 + n * STEP} y="345" textAnchor="middle" fill="#3f4550">{n}</text>
      </g>
    ))}
    {[15, 171, 328].map((y) => <rect key={y} x={X0 - 5} y={y} width="6" height="1" fill="#e0e6f1" />)}
    {provinces.map((p) => {
      const end = X0 + p.value * STEP
      return (
        <g key={p.name}>
          <path d={`M${X0} ${p.y}H${end - 5}q5 0 5 5v25q0 5-5 5H${X0}z`} fill={p.color} />
          <text x={X0 - 8} y={p.y + 21} textAnchor="end" fill="#3f4550">{p.name}</text>
          <text x={end + 5} y={p.y + 21} fontWeight="700" fontSize="13" fill={p.ink}>{p.value}</text>
        </g>
      )
    })}
    <text x="565" y="331" fill="#7d828c">Quantity</text>
  </svg>
)

const App = () => {
  return (
    <div className="relative flex min-h-screen flex-col border-t-3 border-[#1d52bf] bg-white font-['Liberation_Sans',Arial,sans-serif] text-[#333]">
      <div className="flex flex-1">
        {/* Sidebar */}
        <nav className="w-[49px] shrink-0 border-r-5 border-[#ededed] bg-white">
          <button aria-label="Toggle menu" className="flex h-[46px] w-full flex-col items-center justify-center gap-[5px] border-b border-[#e6e8f2] pl-[2px]">
            <span className="h-[3px] w-5 rounded-full bg-[#3b3b3b]" />
            <span className="h-[3px] w-5 rounded-full bg-[#3b3b3b]" />
            <span className="h-[3px] w-5 rounded-full bg-[#3b3b3b]" />
          </button>
          {menu.map((item) => (
            <a
              key={item.label}
              href="#"
              aria-label={item.label}
              className={`flex h-[43px] items-center justify-center border-b border-l-3 border-b-[#e6e8f2] pr-[2px] pb-[2px] ${item.active ? 'border-l-[#1d52bf]' : 'border-l-white'}`}
            >
              <item.icon />
            </a>
          ))}
        </nav>

        <div className="flex min-w-0 flex-1 flex-col">
          {/* Tab bar */}
          <header className="flex h-[43px] items-end justify-between border-b-5 border-[#ededed] bg-[#fafafa] pr-[15px] pl-[7px]">
            <a href="#" className="relative mb-[6px] flex h-[26px] w-[94px] items-center pl-[23px] text-sm text-white">
              <svg className="absolute inset-0" width="94" height="26" viewBox="0 0 94 26" aria-hidden="true">
                <path d="M0 26 8.500 2.500Q9.500 0 12 0H81Q84.500 0 85.500 2.500L94 26z" fill={BLUE} />
              </svg>
              <span className="relative">Home</span>
            </a>
            <button aria-label="Favorites" className="mb-[9px]">
              <svg width="20" height="20" viewBox="0 0 20 20" aria-hidden="true">
                <path d="M1 3q0-2 2-2h5l2 1.500h7q2 0 2 2V10H1z" fill="#ffa95a" />
                <path d="M2 3.800h16v3H2z" fill="#fff" />
                <path d="M.5 5.200h19V16.500Q19.500 19 17 19H3Q.5 19 .5 16.500z" fill="#ff7c50" />
                <path d="M10 7.800l1.200 2.700 2.900.3-2.200 1.900.7 2.900-2.600-1.500-2.600 1.500.7-2.900-2.200-1.900 2.900-.3z" fill="#fff" />
              </svg>
            </button>
          </header>

          <div className="flex flex-1">
            <main className="flex min-w-0 flex-1 flex-col bg-[#ededed]">
              {/* Status cards */}
              <section className="relative border-b border-[#d9dada] bg-white p-[10px]">
                <div className="grid grid-cols-6 gap-[10px]">
                  {cards.map((card) => (
                    <button key={card.label} className={`flex h-[70px] items-center justify-between rounded-[5px] text-right ${card.style}`}>
                      <card.icon />
                      <span>
                        {card.value && <span className="block text-[28px] leading-8">{card.value}</span>}
                        <span className="block text-sm leading-5">{card.label}</span>
                      </span>
                    </button>
                  ))}
                </div>
                <button className="absolute top-full left-1/2 flex h-6 w-[276px] -translate-x-[142px] items-center justify-center gap-[6px] pt-[2px] pl-2 text-[13px] text-[#3484b8]">
                  <svg className="absolute inset-0" width="276" height="25" viewBox="0 0 276 25" aria-hidden="true">
                    <path d="M0-1 14 17Q19 23.500 26 23.500H250Q257 23.500 262 17L276-1" fill="#f4f4f4" stroke="#cfcfcf" />
                  </svg>
                  <span className="relative">Show more status</span>
                  <svg className="relative" width="13" height="10" viewBox="0 0 13 10" aria-hidden="true">
                    <path d="M1.500 2 6.500 7l5-5" fill="none" stroke="currentColor" strokeWidth="3" />
                  </svg>
                </button>
              </section>

              {/* Map and histogram */}
              <section className="mr-[10px] flex bg-white">
                <div className="flex w-[58%] flex-col px-[9px] pt-3">
                  <h2 className="pl-[11px] font-['Open_Sans','Noto_Sans',sans-serif] text-base leading-6 font-semibold">Geographical distribution map</h2>
                  <div className="-mt-[3px] flex justify-center">
                    <WorldMap />
                  </div>
                  <div className="flex items-start">
                    <div className="-mt-[7px] flex w-7 flex-col rounded-[3px] border border-[#c8c8c8] bg-[#f7f7f7]">
                      <button className="h-7 border-b border-[#c8c8c8] pt-[2px] text-base leading-none">+</button>
                      <button className="h-[27px] pt-[2px] text-base leading-none">−</button>
                    </div>
                    <div className="flex-1 pt-[10px] pr-7 font-['Noto_Sans',sans-serif]">
                      <div className="mx-auto w-[198px]">
                        <div className="flex h-3 gap-[2px]">
                          <div className="flex-1 bg-linear-to-r from-[#c7c7fc] to-[#acb1ea]" />
                          <div className="flex-1 bg-linear-to-r from-[#acb1ea] to-[#909dd6]" />
                          <div className="flex-1 bg-linear-to-r from-[#909dd6] to-[#728ac2]" />
                        </div>
                        <div className="flex justify-between pt-[7px] text-[10px] leading-4 text-[#666]">
                          <span>0</span>
                          <span>2.5</span>
                          <span>5</span>
                          <span>7.5</span>
                        </div>
                      </div>
                    </div>
                  </div>
                </div>
                <div className="flex-1 pt-[14px] pb-2 pl-[109px]">
                  <h2 className="font-['Noto_Sans',sans-serif] text-lg leading-[26px] font-bold text-[#464646]">Distribution histogram</h2>
                  <div className="pt-[5px]"><Histogram /></div>
                </div>
              </section>

              {/* Ratios */}
              <section className="mt-[10px] grid flex-1 grid-cols-3 bg-white pt-[9px]">
                <h2 className="pl-5 text-base leading-5 font-bold">Online&amp;Offline Ratio</h2>
                <h2 className="pl-5 text-base leading-5 font-bold">Motion&amp;Stationary Ratio</h2>
                <h2 className="pl-5 text-base leading-5 font-bold">Normal&amp;Abnormal Ratio</h2>
              </section>
            </main>

            {/* Scrollbar */}
            <div className="w-[9px] bg-[#e9effc]">
              <div className="h-[567px] bg-[#8ea8f2]" />
            </div>
          </div>
        </div>
      </div>

      {/* Pointer to the menu button */}
      <svg className="pointer-events-none absolute top-0 left-0 drop-shadow-[2px_3px_2px_rgba(0,0,0,0.5)]" width="190" height="250" viewBox="0 3 190 250" aria-hidden="true">
        <path d="M47 47 168 230" stroke="#ff4343" strokeWidth="9" strokeLinecap="round" />
        <path d="M32 26.500 61 42.300 36 59.300z" fill="#ff4343" />
      </svg>
    </div>
  )
}

export default App
